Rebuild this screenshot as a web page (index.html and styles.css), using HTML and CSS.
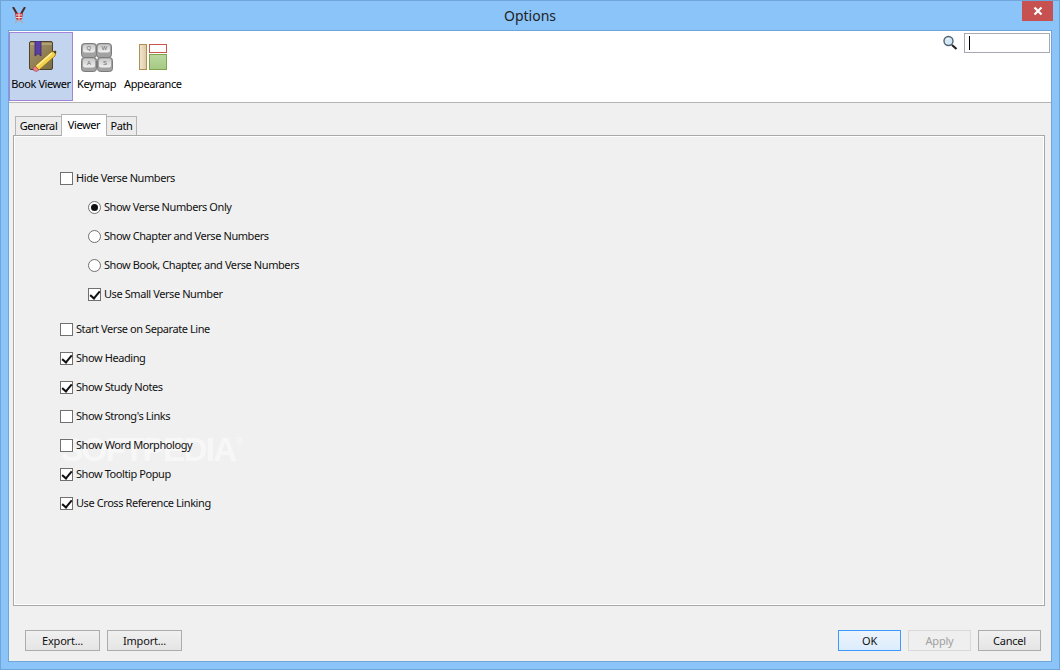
FILE: index.html
```html
<!DOCTYPE html>
<html lang="en">
<head>
<meta charset="utf-8">
<title>Options</title>
<link rel="stylesheet" href="styles.css">
</head>
<body>
<div class="window">
  <header class="titlebar">
    <svg class="app-logo" width="14" height="17" viewBox="0 0 14 17">
      <path d="M1 0l4 7M13 0L9 7" stroke="#4a2c24" stroke-width="2" fill="none"/>
      <path d="M3 6h8l-1 6-3 2-3-2z" fill="#c4343e"/>
      <path d="M4 8h6M4 10.500h6M7 6v8" stroke="#ecdcd6" stroke-width="1"/>
      <path d="M3 16l3-3M11 16l-3-3" stroke="#b5a9a2" stroke-width="1.200"/>
    </svg>
    <span class="title">Options</span>
    <button class="close" aria-label="Close">
      <svg width="10" height="10" viewBox="0 0 10 10"><path d="M1.500 1.500l7 7M8.500 1.500l-7 7" stroke="#fff" stroke-width="2.200"/></svg>
    </button>
  </header>
  <div class="client">
    <div class="toolbar">
      <div class="tool tool-active">
        <svg width="32" height="32" viewBox="0 0 32 32">
          <defs>
            <linearGradient id="cover" x1="0" y1="0" x2="1" y2="1"><stop offset="0" stop-color="#a89668"/><stop offset="1" stop-color="#7c6c46"/></linearGradient>
          </defs>
          <rect x="4.500" y=".5" width="23" height="28" rx="1.500" fill="url(#cover)" stroke="#4e4128"/>
          <path d="M5 3h22" stroke="#c9bb94"/>
          <path d="M10 0h6v15l-3-2.500-3 2.500z" fill="#5b3fa8" stroke="#37246f" stroke-width=".8"/>
          <path d="M10 25L26 11l5-1-1 5-16 14z" fill="#f4d24a" stroke="#8d6d14" stroke-width=".8"/>
          <path d="M12 25L27 12" stroke="#fff2a8" stroke-width="1.500"/>
          <path d="M28 10.500l3-.5-.5 3z" fill="#3a3020"/>
          <path d="M10 25l4 4-2.500 1.500-3-1-.5-2.500z" fill="#ea7f88" stroke="#a04550" stroke-width=".6"/>
        </svg>
        <span>Book Viewer</span>
      </div>
      <div class="tool">
        <svg width="34" height="32" viewBox="0 0 34 32">
          <defs>
            <linearGradient id="keycap" x1="0" y1="0" x2="0" y2="1"><stop offset="0" stop-color="#c8c8c8"/><stop offset="1" stop-color="#f0f0f0"/></linearGradient>
          </defs>
          <g stroke="#7b7b7b" fill="#a2a2a2">
            <rect x="1.500" y="2.500" width="15" height="14" rx="3"/>
            <rect x="16.500" y="2.500" width="15" height="14" rx="3"/>
            <rect x="1.500" y="16.500" width="15" height="14" rx="3"/>
            <rect x="17.500" y="16.500" width="15" height="14" rx="3"/>
          </g>
          <g fill="url(#keycap)">
            <rect x="3" y="3.500" width="12" height="8" rx="2"/>
            <rect x="18" y="3.500" width="12" height="8" rx="2"/>
            <rect x="3" y="17.500" width="12" height="9" rx="2"/>
            <rect x="19" y="17.500" width="12" height="9" rx="2"/>
          </g>
          <g class="keyletters">
            <text x="6.500" y="9">Q</text>
            <text x="21.500" y="9">W</text>
            <text x="7" y="24">A</text>
            <text x="23" y="24">S</text>
          </g>
        </svg>
        <span>Keymap</span>
      </div>
      <div class="tool">
        <svg width="32" height="32" viewBox="0 0 32 32">
          <defs>
            <linearGradient id="sidebar" x1="0" y1="0" x2="1" y2="0"><stop offset="0" stop-color="#f0e8d4"/><stop offset="1" stop-color="#dcc9a0"/></linearGradient>
            <linearGradient id="pane" x1="0" y1="0" x2="0" y2="1"><stop offset="0" stop-color="#bcd8a0"/><stop offset="1" stop-color="#a4ca82"/></linearGradient>
          </defs>
          <rect x="2.500" y="3.500" width="7" height="25" fill="url(#sidebar)" stroke="#b08f50"/>
          <rect x="12.500" y="3.500" width="17" height="8" fill="#fff" stroke="#c8584c"/>
          <rect x="12.500" y="13.500" width="17" height="15" fill="url(#pane)" stroke="#7fa34e"/>
        </svg>
        <span>Appearance</span>
      </div>
      <div class="search">
        <svg width="16" height="16" viewBox="0 0 16 16">
          <circle cx="6.500" cy="6" r="4.500" fill="#d6e8f6" stroke="#4c6478" stroke-width="1.400"/>
          <path d="M4.500 5c.5-1.200 1.500-1.500 2.500-1.500" stroke="#fff" fill="none"/>
          <path d="M10 10l4.500 4" stroke="#222" stroke-width="2.200"/>
        </svg>
        <div class="search-input"><i class="caret"></i></div>
      </div>
    </div>
    <div class="body">
      <div class="tabs">
        <div class="tab tab-general">General</div>
        <div class="tab tab-viewer">Viewer</div>
        <div class="tab tab-path">Path</div>
      </div>
      <div class="panel">
        <div class="options">
          <label class="opt"><i class="box"></i>Hide Verse Numbers</label>
          <div class="sub">
            <label class="opt"><i class="radio on"></i>Show Verse Numbers Only</label>
            <label class="opt"><i class="radio"></i>Show Chapter and Verse Numbers</label>
            <label class="opt"><i class="radio"></i>Show Book, Chapter, and Verse Numbers</label>
            <label class="opt"><i class="box on"></i>Use Small Verse Number</label>
          </div>
          <label class="opt"><i class="box"></i>Start Verse on Separate Line</label>
          <label class="opt"><i class="box on"></i>Show Heading</label>
          <label class="opt"><i class="box on"></i>Show Study Notes</label>
          <label class="opt"><i class="box"></i>Show Strong's Links</label>
          <label class="opt"><i class="box"></i>Show Word Morphology</label>
          <label class="opt"><i class="box on"></i>Show Tooltip Popup</label>
          <label class="opt"><i class="box on"></i>Use Cross Reference Linking</label>
        </div>
        <div class="watermark">SOFTPEDIA<sup>®</sup></div>
      </div>
      <div class="actions">
        <div class="group">
          <button class="btn wide">Export...</button>
          <button class="btn wide">Import...</button>
        </div>
        <div class="group">
          <button class="btn default">OK</button>
          <button class="btn disabled">Apply</button>
          <button class="btn">Cancel</button>
        </div>
      </div>
    </div>
  </div>
</div>
</body>
</html>
```
FILE: styles.css
```css
* { box-sizing: border-box; }
html, body { margin: 0; padding: 0; }
body { font-family: "Noto Sans", "Liberation Sans", sans-serif; font-size: 11px; letter-spacing: -.42px; color: #000; overflow: hidden; }
.window { width: 1060px; height: 670px; background: #8ac4f9; border: 1px solid #6fa5d8; padding: 0 7px 7px 7px; display: flex; flex-direction: column; }
.titlebar { height: 29px; flex: none; display: flex; align-items: flex-start; position: relative; margin: 0 -7px; }
.app-logo { margin: 6px 0 0 11px; }
.title { position: absolute; left: 0; right: 0; top: 5px; text-align: center; font-size: 14px; line-height: 20px; letter-spacing: 0; color: #222; }
.close { position: absolute; right: 6px; top: 0; width: 31px; height: 20px; border: 0; padding: 0; background: #c75050; display: flex; align-items: center; justify-content: center; }
.client { flex: 1; min-height: 0; background: #f0f0f0; border: 1px solid #6fa5d8; display: flex; flex-direction: column; }
.toolbar { height: 72px; flex: none; background: #fff; border-bottom: 1px solid #b4b4b4; display: flex; align-items: flex-start; position: relative; padding: 1px 0 0 0; }
.tool { height: 69px; display: flex; flex-direction: column; align-items: center; padding: 8px 3px 0; line-height: 16px; border: 1px solid transparent; }
.tool span { margin-top: 3px; white-space: nowrap; }
.tool-active { width: 64px; background: #c3d4ee; border-color: #a284d8; }
.keyletters { font-family: "Liberation Sans", sans-serif; font-size: 6px; letter-spacing: 0; fill: #666; }
.search { position: absolute; right: 1px; top: 2px; display: flex; align-items: center; gap: 6px; }
.search-input { width: 86px; height: 20px; background: #fff; border: 1px solid #a9a9b2; padding: 2px; }
.caret { display: block; width: 1px; height: 14px; background: #000; margin-left: 2px; }
.body { flex: 1; min-height: 0; padding: 11px 6px 0 4px; display: flex; flex-direction: column; }
.tabs { display: flex; height: 21px; flex: none; align-items: flex-end; padding-left: 2px; position: relative; z-index: 1; }
.tab { height: 19px; line-height: 18px; text-align: center; border: 1px solid #b4b4b4; border-bottom: 0; background: #ececec; margin-right: -1px; }
.tab-general { width: 47px; }
.tab-viewer { width: 46px; height: 22px; line-height: 19px; background: #fff; margin-bottom: -1px; position: relative; }
.tab-path { width: 31px; }
.panel { height: 471px; flex: none; border: 1px solid #a8a8a8; background: #f0f0f0; box-shadow: inset 0 0 0 1px #fff; position: relative; padding: 34px 0 0 46px; }
.options { display: flex; flex-direction: column; gap: 13px; position: relative; z-index: 1; }
.sub { display: flex; flex-direction: column; gap: 13px; padding-left: 28px; padding-bottom: 6px; }
.opt { display: flex; align-items: center; height: 16px; line-height: 16px; white-space: nowrap; color: #111; }
.box { width: 13px; height: 13px; border: 1px solid #707070; background: #fff; margin-right: 3px; position: relative; flex: none; }
.box.on::after { content: ""; position: absolute; left: 3px; top: 0; width: 4px; height: 8px; border: solid #111; border-width: 0 2px 2px 0; transform: rotate(40deg); }
.radio { width: 13px; height: 13px; border: 1px solid #707070; border-radius: 50%; background: #fff; margin-right: 3px; position: relative; flex: none; }
.radio.on::after { content: ""; position: absolute; left: 2px; top: 2px; width: 7px; height: 7px; border-radius: 50%; background: #111; }
.watermark { position: absolute; left: 47px; top: 296px; font-family: "Liberation Sans", sans-serif; font-weight: 700; font-size: 33px; line-height: 36px; letter-spacing: -1.600px; color: rgba(255,255,255,.55); white-space: nowrap; pointer-events: none; }
.watermark sup { font-size: 10px; vertical-align: 16px; line-height: 0; font-weight: 400; }
.actions { display: flex; justify-content: space-between; padding: 24px 4px 0 12px; }
.group { display: flex; gap: 7px; }
.btn { width: 63px; height: 21px; font: inherit; letter-spacing: -.2px; line-height: 17px; padding: 0; border: 1px solid #acacac; background: linear-gradient(#f0f0f0, #e5e5e5); color: #111; }
.btn.wide { width: 75px; }
.btn.default { border-color: #3d9bff; background: linear-gradient(#ecf4fc, #dcecfc); }
.btn.disabled { border-color: #d9d9d9; background: #efefef; color: #a0a0a0; }
```
